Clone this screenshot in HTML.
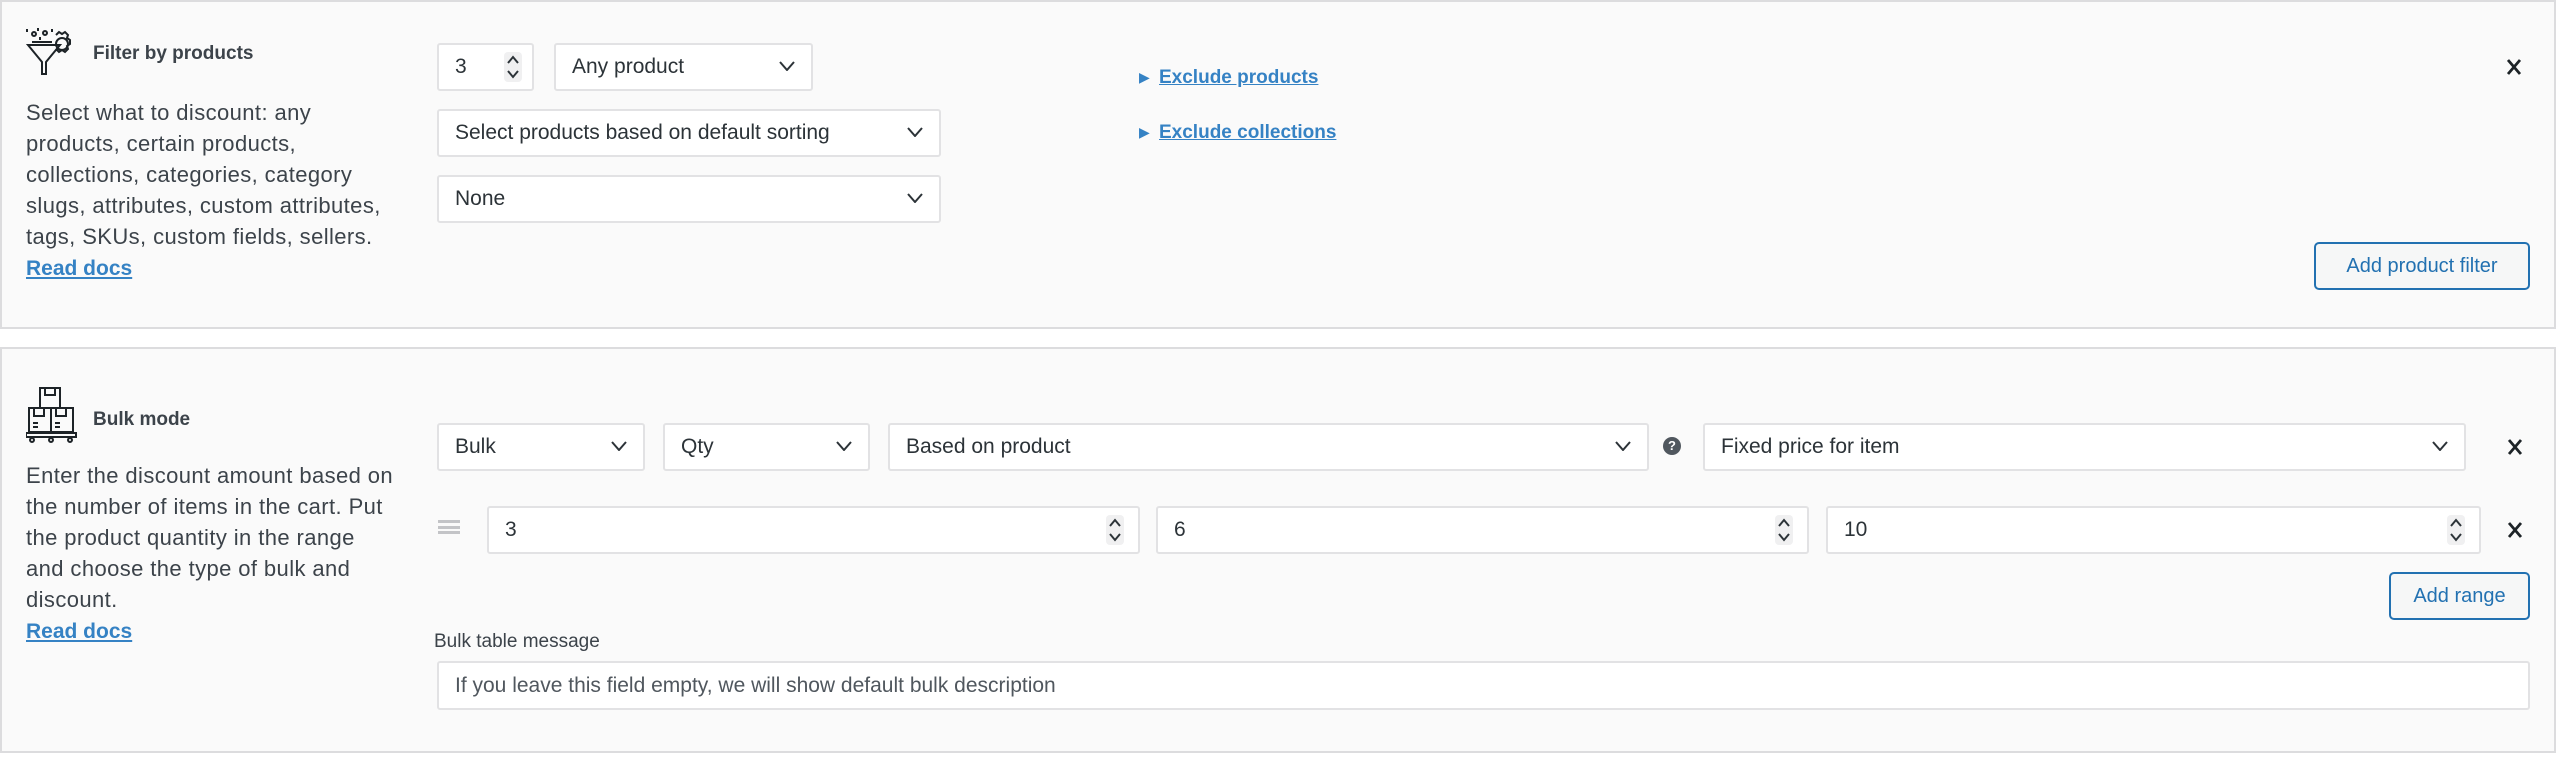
<!DOCTYPE html>
<html><head><meta charset="utf-8"><style>
*{box-sizing:border-box;margin:0;padding:0}
body{width:2560px;height:759px;background:#fff;font-family:"Liberation Sans",sans-serif;position:relative;overflow:hidden;color:#3c434a}
.panel{position:absolute;left:0;width:2556px;background:#fafafa;border:2px solid #dcdcde}
.a{position:absolute}
.title{font-weight:bold;font-size:19px;color:#3c434a}
.desc{font-size:22px;letter-spacing:0.4px;line-height:31px;color:#3c434a;white-space:nowrap}
.link{color:#3582c4;font-weight:bold;text-decoration:underline;font-size:21px;letter-spacing:0}
.f{position:absolute;background:#fff;border:2px solid #e2e2e4;border-radius:3px;font-size:21px;color:#2c3338;display:flex;align-items:center;padding-left:16px}
.chev{position:absolute;right:16px;top:50%;margin-top:-6px}
.spin{position:absolute;right:14px;top:50%;margin-top:-15px;width:18px;height:30px;background:#f0f0f1;border-radius:4px}
.x{position:absolute}
.btn{position:absolute;border:2px solid #2271b1;border-radius:5px;color:#2271b1;font-size:20px;display:flex;align-items:center;justify-content:center;background:#f6f7f7}
</style></head><body>
<svg width="0" height="0" style="position:absolute"><defs>
<symbol id="cv" viewBox="0 0 16 10"><path d="M1 1l7 8 7-8" fill="none" stroke="#2c3338" stroke-width="2"/></symbol>
<symbol id="sp" viewBox="0 0 18 30"><path d="M4 11l5-6 5 6M4 19l5 6 5-6" fill="none" stroke="#2c3338" stroke-width="2"/></symbol>
<symbol id="xx" viewBox="0 0 18 20"><path d="M3 3l12 14M15 3L3 17" fill="none" stroke="#1d2327" stroke-width="2.8"/></symbol>
</defs></svg>

<div class="panel" style="top:0;height:329px"></div>
<svg class="a" style="left:26px;top:26px" width="50" height="50" viewBox="0 0 50 50" fill="none" stroke="#1d2327" stroke-width="2">
<circle cx="8" cy="8" r="2"/><circle cx="19" cy="7" r="2"/><path d="M1 3v3M12 2v3M26 3v3M14 11v3"/>
<path d="M2 19h32L20 36v12h-4V36z"/><path d="M6 16h20"/>
<circle cx="36" cy="18" r="6"/><path d="M30 9l3-3 3 2 3-2 3 3-1 3 3 2v4l-3 2 1 3-3 3-3-2-3 2-3-3"/>
</svg>
<div class="a title" style="left:93px;top:43px">Filter by products</div>
<div class="a desc" style="left:26px;top:97px">Select what to discount: any<br>products, certain products,<br>collections, categories, category<br>slugs, attributes, custom attributes,<br>tags, SKUs, custom fields, sellers.<br><span class="link">Read docs</span></div>

<div class="f" style="left:437px;top:43px;width:97px;height:48px">3<svg class="spin" viewBox="0 0 18 30" style="right:10px"><use href="#sp"/></svg></div>
<div class="f" style="left:554px;top:43px;width:259px;height:48px">Any product<svg class="chev" width="16" height="10"><use href="#cv"/></svg></div>
<div class="f" style="left:437px;top:109px;width:504px;height:48px">Select products based on default sorting<svg class="chev" width="16" height="10"><use href="#cv"/></svg></div>
<div class="f" style="left:437px;top:175px;width:504px;height:48px">None<svg class="chev" width="16" height="10"><use href="#cv"/></svg></div>

<div class="a" style="left:1139px;top:69px;color:#3582c4;font-size:14px">▶</div>
<div class="a link" style="left:1159px;top:67px;font-size:19px">Exclude products</div>
<div class="a" style="left:1139px;top:124px;color:#3582c4;font-size:14px">▶</div>
<div class="a link" style="left:1159px;top:122px;font-size:19px">Exclude collections</div>
<svg class="x" style="left:2505px;top:57px" width="18" height="20"><use href="#xx"/></svg>
<div class="btn" style="left:2314px;top:242px;width:216px;height:48px">Add product filter</div>

<div class="panel" style="top:347px;height:406px"></div>
<svg class="a" style="left:26px;top:387px" width="52" height="56" viewBox="0 0 52 56" fill="none" stroke="#1d2327" stroke-width="2">
<rect x="14" y="1" width="20" height="20"/><path d="M19 1v7h10V1"/>
<rect x="3" y="21" width="22" height="24"/><rect x="25" y="21" width="22" height="24"/>
<path d="M8 21v8h10v-8M30 21v8h10v-8M7 36h5M7 40h5M29 36h5M29 40h5"/>
<path d="M0 46h50v4H0z"/><circle cx="6" cy="53" r="2"/><circle cx="25" cy="53" r="2"/><circle cx="44" cy="53" r="2"/>
</svg>
<div class="a title" style="left:93px;top:409px">Bulk mode</div>
<div class="a desc" style="left:26px;top:460px">Enter the discount amount based on<br>the number of items in the cart. Put<br>the product quantity in the range<br>and choose the type of bulk and<br>discount.<br><span class="link">Read docs</span></div>

<div class="f" style="left:437px;top:423px;width:208px;height:48px">Bulk<svg class="chev" width="16" height="10"><use href="#cv"/></svg></div>
<div class="f" style="left:663px;top:423px;width:207px;height:48px">Qty<svg class="chev" width="16" height="10"><use href="#cv"/></svg></div>
<div class="f" style="left:888px;top:423px;width:761px;height:48px">Based on product<svg class="chev" width="16" height="10"><use href="#cv"/></svg></div>
<div class="a" style="left:1663px;top:437px;width:18px;height:18px;border-radius:50%;background:#50575e;color:#fff;font-size:13px;font-weight:bold;text-align:center;line-height:18px">?</div>
<div class="f" style="left:1703px;top:423px;width:763px;height:48px">Fixed price for item<svg class="chev" width="16" height="10"><use href="#cv"/></svg></div>
<svg class="x" style="left:2506px;top:437px" width="18" height="20"><use href="#xx"/></svg>

<div class="a" style="left:438px;top:520px;width:22px;height:14px;border-top:3px solid #c3c4c7;border-bottom:3px solid #c3c4c7"><div style="margin-top:2.5px;height:3px;background:#c3c4c7"></div></div>
<div class="f" style="left:487px;top:506px;width:653px;height:48px">3<svg class="spin" viewBox="0 0 18 30"><use href="#sp"/></svg></div>
<div class="f" style="left:1156px;top:506px;width:653px;height:48px">6<svg class="spin" viewBox="0 0 18 30"><use href="#sp"/></svg></div>
<div class="f" style="left:1826px;top:506px;width:655px;height:48px">10<svg class="spin" viewBox="0 0 18 30"><use href="#sp"/></svg></div>
<svg class="x" style="left:2506px;top:520px" width="18" height="20"><use href="#xx"/></svg>
<div class="btn" style="left:2389px;top:572px;width:141px;height:48px">Add range</div>

<div class="a" style="left:434px;top:631px;font-size:19px;color:#3c434a">Bulk table message</div>
<div class="f" style="left:437px;top:661px;width:2093px;height:49px;color:#50575e">If you leave this field empty, we will show default bulk description</div>
</body></html>
